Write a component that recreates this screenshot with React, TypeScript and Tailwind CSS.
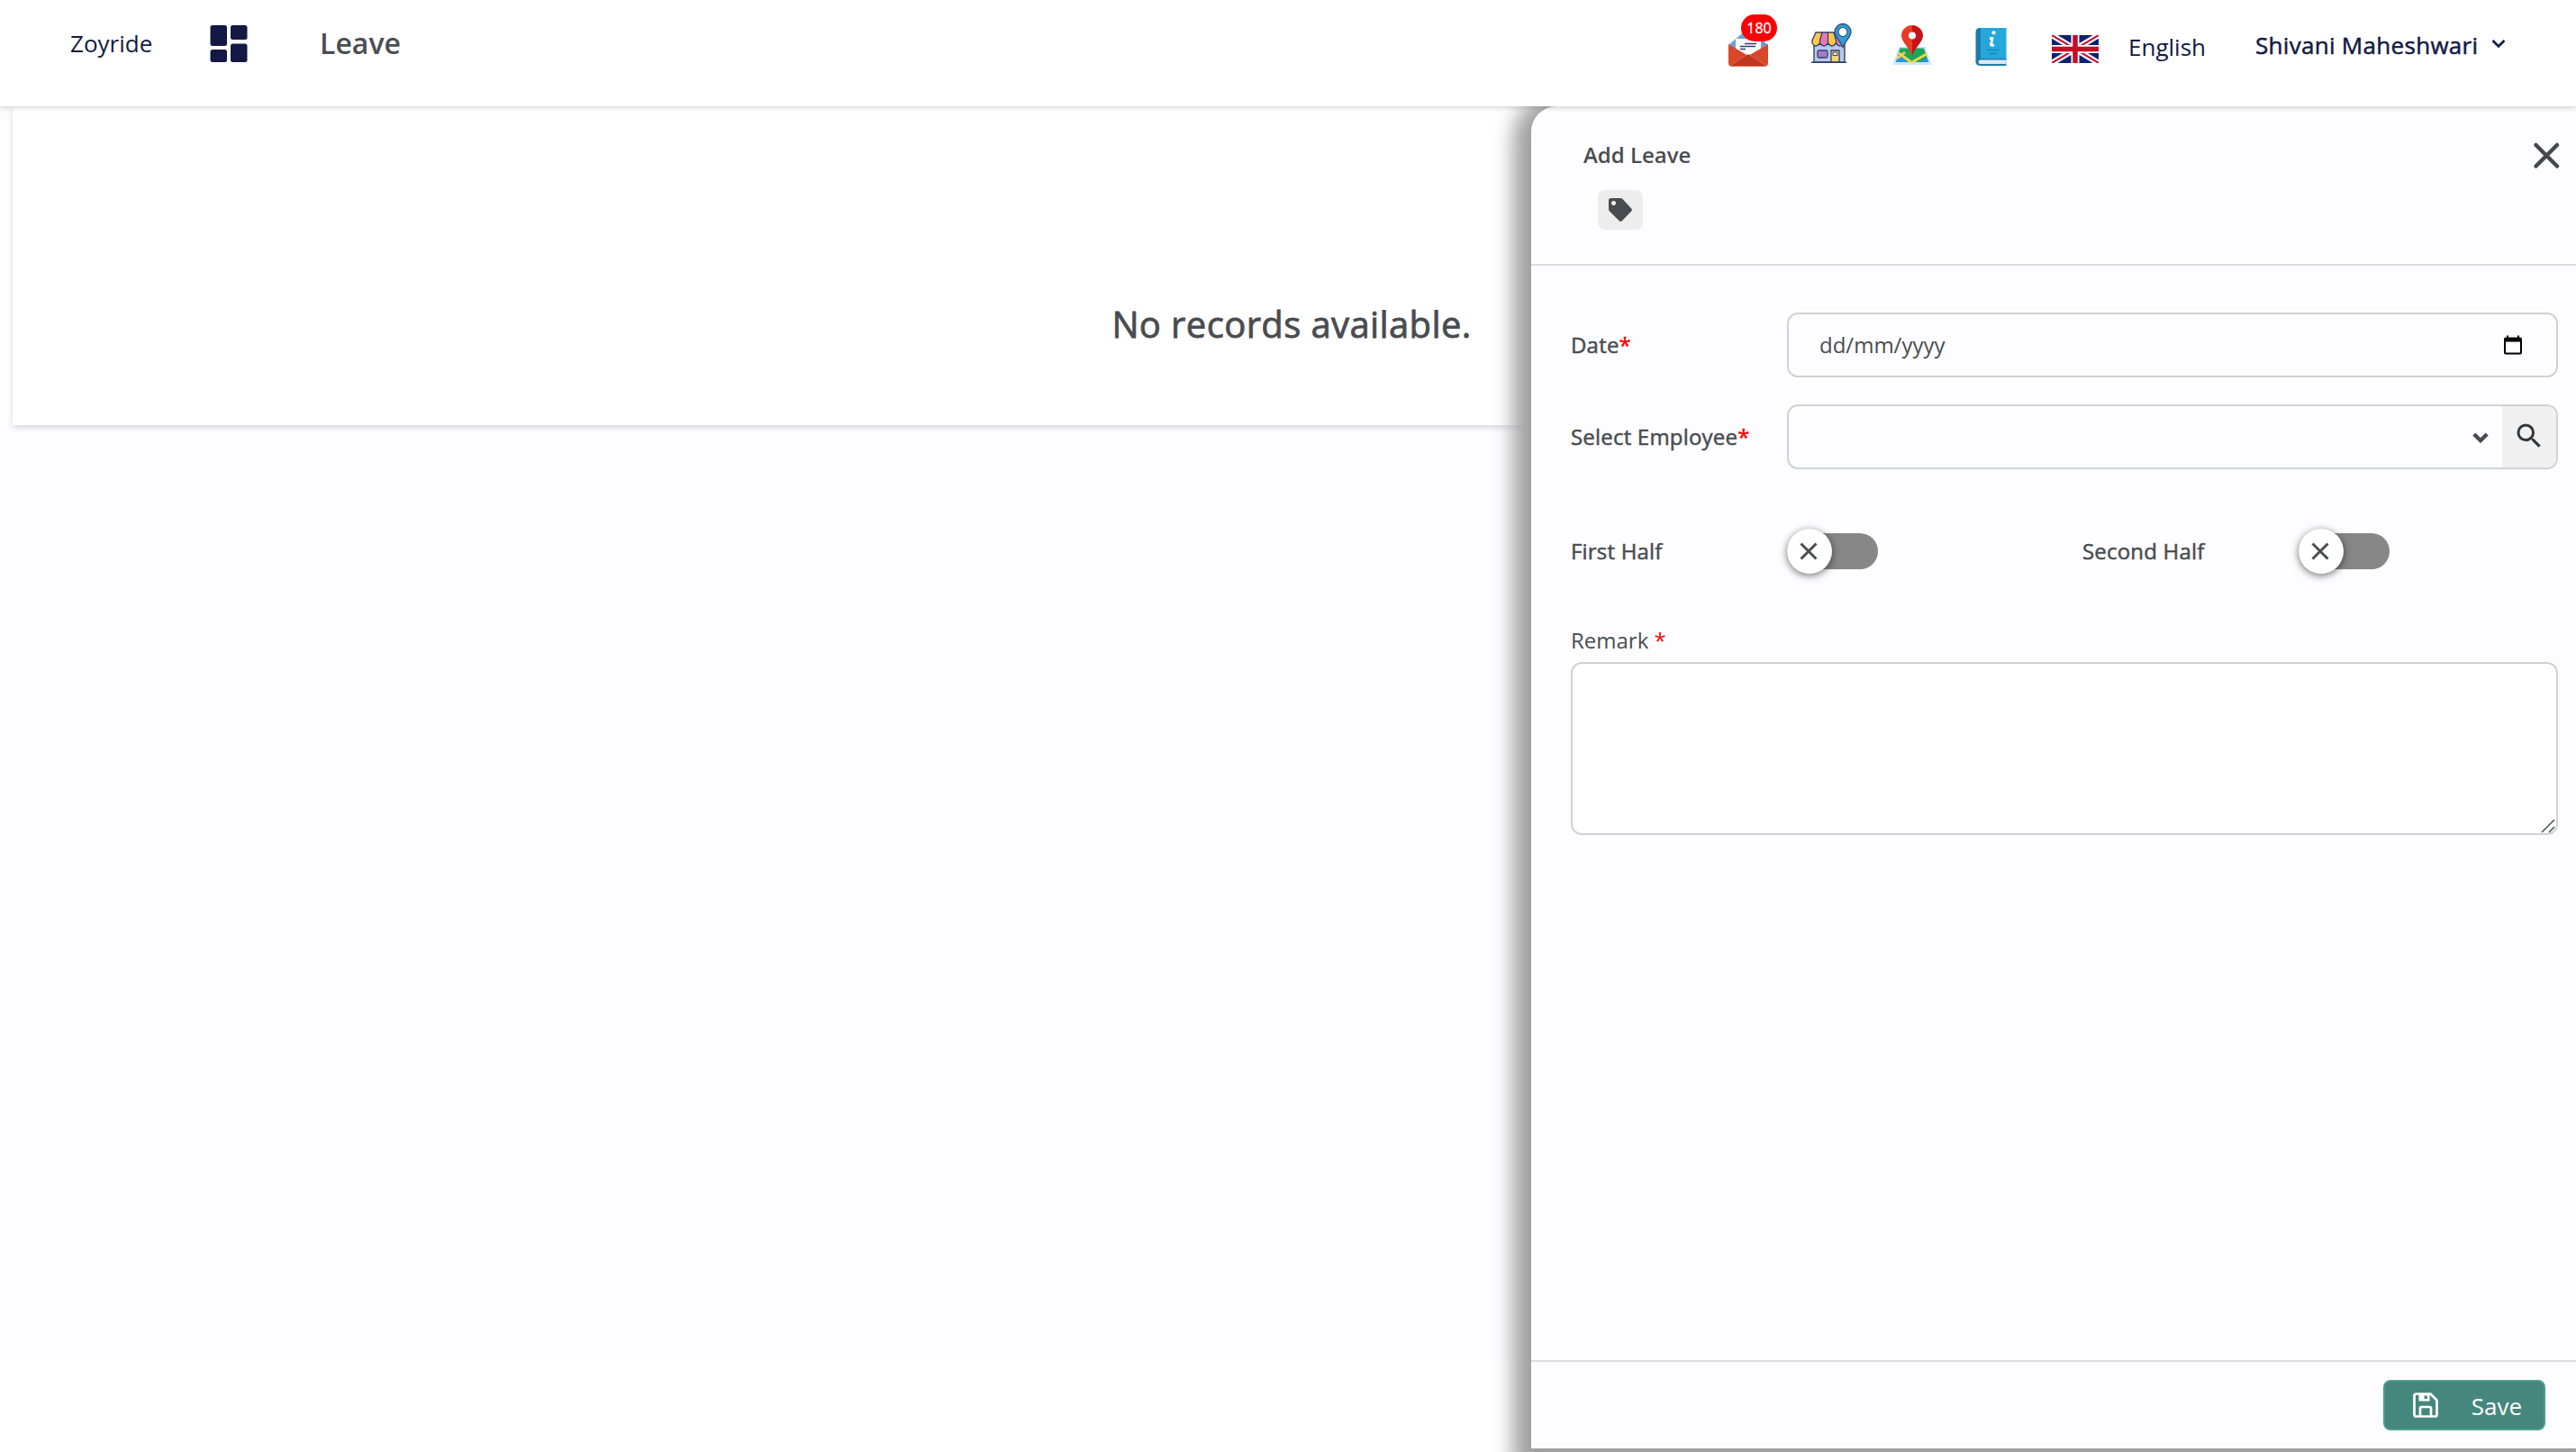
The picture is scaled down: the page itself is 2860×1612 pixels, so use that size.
import { useState } from 'react'
import clsx from 'clsx'
import { MdSearch } from 'react-icons/md'

function DashboardIcon() {
  return (
    <svg width="42" height="42" viewBox="0 0 42 42" fill="#131944">
      <rect x="0.5" y="0" width="18.5" height="23" rx="2.5" />
      <rect x="23" y="0" width="18.5" height="16" rx="2.5" />
      <rect x="0.5" y="27" width="18.5" height="14" rx="2.5" />
      <rect x="23" y="20.5" width="18.5" height="20.5" rx="2.5" />
    </svg>
  )
}

function MailIcon() {
  return (
    <svg width="44" height="44" viewBox="0 0 44 44">
      <path d="M0 20 20 3Q22 1.500 24 3L44 20V24H0Z" fill="#6f9fd4" />
      <path d="M8 14Q8 13 9 13H35Q36 13 36 14V36H8Z" fill="#fff" />
      <path d="M18 18.500H31M13 21.500H30M13 24.500H19" stroke="#39397d" strokeWidth="1.600" />
      <path d="M0 19 22 32 44 19V40Q44 43.500 40.500 43.500H3.500Q0 43.500 0 40Z" fill="#d9472b" />
      <path d="M2 43 20 31Q22 29.800 24 31L42 43Q41.500 43.500 40.500 43.500H3.500Q2.500 43.500 2 43Z" fill="#bf3622" />
      <path d="M2 43 20 31Q22 29.800 24 31L42 43" fill="none" stroke="#ee8a68" strokeWidth="0.800" strokeDasharray="2 1" />
    </svg>
  )
}

function StoreIcon() {
  return (
    <svg width="46" height="46" viewBox="0 0 46 46">
      <path d="M3 22H37V44H3Z" fill="#b6c9ee" stroke="#34406b" strokeWidth="1.400" />
      <path d="M5 11H32L36 21V23Q32 29 27.500 23Q23 29 18.500 23Q14 29 9.500 23Q5 29 1 23V20Z" fill="#fdc945" />
      <path d="M12 11H19L18.500 23Q14 28 9.500 23V20ZM25 11H31L36 23Q32 28 27.500 23V20Z" fill="#e879b4" />
      <path d="M5 11H32L36 21V23Q32 29 27.500 23Q23 29 18.500 23Q14 29 9.500 23Q5 29 1 23V20ZM12 11 9.500 20V23M18.500 11V23M25 11 27.500 20V23" fill="none" stroke="#34406b" strokeWidth="1.300" />
      <rect x="7" y="31" width="11" height="8" rx="1.500" fill="#a67dc4" stroke="#34406b" strokeWidth="1.300" />
      <path d="M22 44V31H31V44Z" fill="#ffd66b" stroke="#34406b" strokeWidth="1.300" />
      <path d="M24 33H29V36.500H24Z" fill="#e4edfb" stroke="#34406b" strokeWidth="1" />
      <path d="M0 44.300H39" stroke="#34406b" strokeWidth="1.500" />
      <path d="M35 27.500C32 20 26 16 26 10.500A9 9 0 0 1 44 10.500C44 16 38 20 35 27.500Z" fill="#2f9fd6" stroke="#2c4a78" strokeWidth="1.300" />
      <circle cx="35" cy="10.500" r="5" fill="#fff" stroke="#2c4a78" strokeWidth="1.100" />
    </svg>
  )
}

function MapIcon() {
  return (
    <svg width="44" height="46" viewBox="0 0 44 46">
      <path d="M7 25H37L43.500 45H0.500Z" fill="#cfe4fa" />
      <path d="M8.500 26.500H35L40 42H4Z" fill="#1ba55b" />
      <path d="M4.500 40 7 33 20 42H4Z" fill="#2b95dc" />
      <path d="M7 32 21 42M5 38 14 31M22 42 38 33" fill="none" stroke="#f3d34c" strokeWidth="2.800" />
      <path d="M30 42 38.500 37 40 42Z" fill="#2b95dc" />
      <path d="M22 35C20 27 10 20 10 12.500A12 12 0 0 1 22 1Z" fill="#ea3a21" />
      <path d="M22 35C24 27 34 20 34 12.500A12 12 0 0 0 22 1Z" fill="#c8121a" />
      <circle cx="22" cy="12.500" r="4" fill="#fff" />
    </svg>
  )
}

function GuideIcon() {
  return (
    <svg width="35" height="44" viewBox="0 0 35 44">
      <path d="M5 1H34.500V36H4Z" fill="#25a7dc" />
      <path d="M5 1H6V36L0.500 39V6Q0.500 1 5 1Z" fill="#1c7da6" />
      <path d="M6 35H34.500V43H6Q0.500 43 0.500 38.500Q1 35 6 35Z" fill="#1c7da6" />
      <path d="M6 36.500H34.500V41H6Q3.500 41 3.500 38.800Q3.500 36.500 6 36.500Z" fill="#dbe7f2" />
      <circle cx="20.500" cy="6.300" r="2.100" fill="#fff" />
      <path d="M16 12.500H19L17.500 19.500Q18 21 21 19.800" fill="none" stroke="#fff" strokeWidth="2.800" strokeLinejoin="round" />
      <path d="M12.500 25.500H26.500M15.500 29.500H23.500" stroke="#1787b5" strokeWidth="1.400" />
    </svg>
  )
}

function FlagIcon() {
  return (
    <svg width="52" height="31" viewBox="0 0 52 31">
      <path d="M0 0H52V31H0Z" fill="#0a2272" />
      <path d="M0 0 52 31M52 0 0 31" stroke="#fff" strokeWidth="6.500" />
      <path d="M0 0 52 31M52 0 0 31" stroke="#c8102e" strokeWidth="2" />
      <path d="M26 0V31M0 15.500H52" stroke="#fff" strokeWidth="9" />
      <path d="M26 0V31M0 15.500H52" stroke="#c60c22" strokeWidth="5.500" />
    </svg>
  )
}

function CalendarIcon() {
  return (
    <svg width="20" height="22" viewBox="0 0 20 22">
      <path
        fillRule="evenodd"
        d="M3 0.500H5V2.500H15V0.500H17V2.500H18Q20 2.500 20 4.500V19.500Q20 21.500 18 21.500H2Q0 21.500 0 19.500V4.500Q0 2.500 2 2.500H3ZM2 7.500V19.500H18V7.500Z"
        fill="#000"
      />
    </svg>
  )
}

function SaveIcon() {
  return (
    <svg width="28" height="28" viewBox="0 0 28 28" fill="none" stroke="#fff" strokeWidth="2.700">
      <path d="M3.500 1.500H19.500L26.500 8.500V24.500Q26.500 26.500 24.500 26.500H3.500Q1.500 26.500 1.500 24.500V3.500Q1.500 1.500 3.500 1.500Z" strokeLinejoin="round" />
      <path d="M8 26V17.500Q8 16 9.500 16H18.500Q20 16 20 17.500V26" />
      <path fillRule="evenodd" d="M6.500 2H18.500V9.500H6.500ZM12.500 3.500V7H15.800V3.500Z" fill="#fff" stroke="none" />
    </svg>
  )
}

function Toggle() {
  const [checked, setChecked] = useState(false)

  return (
    <button
      type="button"
      role="switch"
      aria-checked={checked}
      onClick={() => setChecked(!checked)}
      className={clsx(
        'flex h-10 w-[101px] items-center rounded-[20px]',
        checked ? 'justify-end bg-[#43897d]' : 'justify-start bg-[#878787]'
      )}
    >
      <span className="flex h-[50px] w-[50px] shrink-0 items-center justify-center rounded-full bg-white pr-0.5 shadow-[0_2px_8px_rgba(0,0,0,0.55)]">
        <svg width="20" height="20" viewBox="0 0 20 20" stroke="#4a4e52" strokeWidth="3">
          <path d="M1.500 1.500 18.500 18.500M18.500 1.500 1.500 18.500" />
        </svg>
      </span>
    </button>
  )
}

function Label({ text }: { text: string }) {
  return (
    <label className="w-60 shrink-0 tracking-[0.2px] [-webkit-text-stroke:0.5px]">
      {text}
      <span className="text-[#f50000]">*</span>
    </label>
  )
}

export default function App() {
  const [remark, setRemark] = useState('')

  return (
    <div className="relative flex h-[1612px] w-[2860px] flex-col overflow-hidden bg-white font-['Open_Sans',sans-serif] text-2xl text-[#484c50]">
      <header className="relative z-20 flex h-[118px] shrink-0 bg-white text-[26px] leading-9 text-[#131944] shadow-[0_2px_6px_rgba(0,0,0,0.16)]">
        <span className="mt-[30px] ml-[78px] w-[155px]">Zoyride</span>
        <div className="mt-7 w-[122px]">
          <DashboardIcon />
        </div>
        <h1 className="mt-[30px] text-[32px] font-semibold text-[#4a4e52]">Leave</h1>

        <div className="ml-auto flex pr-[78px]">
          <div className="relative mt-[30px] w-[92px]">
            <MailIcon />
            <span className="absolute -top-[14px] left-[14px] flex h-[30px] w-10 items-center justify-center rounded-[15px] bg-[#fb0007] text-base text-white [-webkit-text-stroke:0.3px]">
              180
            </span>
          </div>
          <div className="mt-[25px] w-[90px]">
            <StoreIcon />
          </div>
          <div className="mt-[27px] w-[92px]">
            <MapIcon />
          </div>
          <div className="mt-[30px] w-[85px]">
            <GuideIcon />
          </div>
          <div className="mt-[39px] w-[85px]">
            <FlagIcon />
          </div>
          <span className="mt-[34px] w-[141px]">English</span>
          <span className="mt-8 w-[262px] tracking-[0.3px] [-webkit-text-stroke:0.5px]">Shivani Maheshwari</span>
          <svg className="mt-[43px]" width="16" height="12" viewBox="0 0 16 12" fill="none" stroke="#131944" strokeWidth="2.600">
            <path d="M1.500 2 8 8.500 14.500 2" />
          </svg>
        </div>
      </header>

      <main className="h-[1392px] bg-[#fdfdff] pl-[14px]">
        <section className="flex h-[354px] w-[2840px] items-end justify-center bg-white pb-[84px] shadow-[0_3px_6px_rgba(30,30,60,0.16)]">
          <p className="text-[40px] leading-[56px] tracking-[0.38px] [-webkit-text-stroke:0.8px]">No records available.</p>
        </section>
      </main>

      {/* drawer over the page */}
      <aside className="absolute top-[118px] right-0 z-10 flex h-[1490px] w-[1160px] flex-col rounded-tl-[28px] bg-[#fdfdff] shadow-[0_8px_22px_20px_#a0a0a0]">
        <div className="flex h-[177px] shrink-0 justify-between border-b-2 border-[#dcdde0] pt-9 pr-5 pl-[58px]">
          <div>
            <h2 className="leading-9 font-semibold">Add Leave</h2>
            <button type="button" className="mt-[21px] ml-4 flex h-11 w-[50px] items-center justify-center rounded-lg bg-[#ededee]">
              <svg width="26" height="26" viewBox="0 0 26 26">
                <path
                  fillRule="evenodd"
                  d="M2.500 0H13Q14.500 0 15.500 1L25.200 11.500Q26.600 13 25.200 14.500L14.800 25.200Q13.300 26.500 11.800 25.200L1 14.500Q0 13.500 0 12V2.500Q0 0 2.500 0ZM5.500 3A2.500 2.500 0 1 0 5.600 3Z"
                  fill="#484c50"
                />
              </svg>
            </button>
          </div>
          <svg className="mt-[5px] -mr-0.5" width="28" height="28" viewBox="0 0 28 28" stroke="#44474b" strokeWidth="4.500" strokeLinecap="round" overflow="visible">
            <path d="M1.500 2 25 25.500M25 2 1.500 25.500" />
          </svg>
        </div>

        <div className="flex grow flex-col pt-[52px] pr-5 pl-11">
          <div className="flex h-[72px] items-center">
            <Label text="Date" />
            <div className="flex h-full grow items-center justify-between rounded-xl border-2 border-[#d0d2d4] pr-[38px] pl-[34px]">
              <span>dd/mm/yyyy</span>
              <CalendarIcon />
            </div>
          </div>

          <div className="mt-[30px] flex h-[72px] items-center">
            <Label text="Select Employee" />
            <div className="flex h-full grow items-center justify-end overflow-hidden rounded-xl border-2 border-[#d0d2d4]">
              <svg className="mt-0.5 mr-[15px]" width="18" height="12" viewBox="0 0 18 12" fill="none" stroke="#484c50" strokeWidth="4.400">
                <path d="M1.800 2 9 9 16.200 2" />
              </svg>
              <div className="flex h-full w-[60px] items-center justify-center bg-[#f0f0f1] pb-0.5">
                <MdSearch size={36} color="#333639" />
              </div>
            </div>
          </div>

          <div className="mt-[66px] flex h-[50px] items-center tracking-[0.2px] [-webkit-text-stroke:0.5px]">
            <span className="w-60">First Half</span>
            <Toggle />
            <span className="ml-[227px] w-60">Second Half</span>
            <Toggle />
          </div>

          <label className="mt-14 leading-9">
            Remark <span className="text-[#f50000]">*</span>
          </label>
          <div className="relative mt-1.5 h-48">
            <textarea
              value={remark}
              onChange={(e) => setRemark(e.target.value)}
              className="h-full w-full resize-none rounded-xl border-2 border-[#d0d2d4] bg-white p-4 outline-none"
            />
            <svg className="absolute right-[3px] bottom-0.5" width="16" height="16" viewBox="0 0 16 16" stroke="#55585c" strokeWidth="1.700">
              <path d="M1 15 15 1M9 15 15 9" />
            </svg>
          </div>
        </div>

        <div className="flex h-[98px] shrink-0 items-start justify-end border-t-2 border-[#dcdde0] pt-5 pr-[34px]">
          <button
            type="button"
            className="flex h-14 w-[180px] items-center justify-between rounded-lg border-2 border-[#4c9c8c] bg-[#45877d] pr-6 pl-[31px] text-[26px] text-white"
          >
            <SaveIcon />
            <span className="pt-0.5">Save</span>
          </button>
        </div>
      </aside>
    </div>
  )
}
